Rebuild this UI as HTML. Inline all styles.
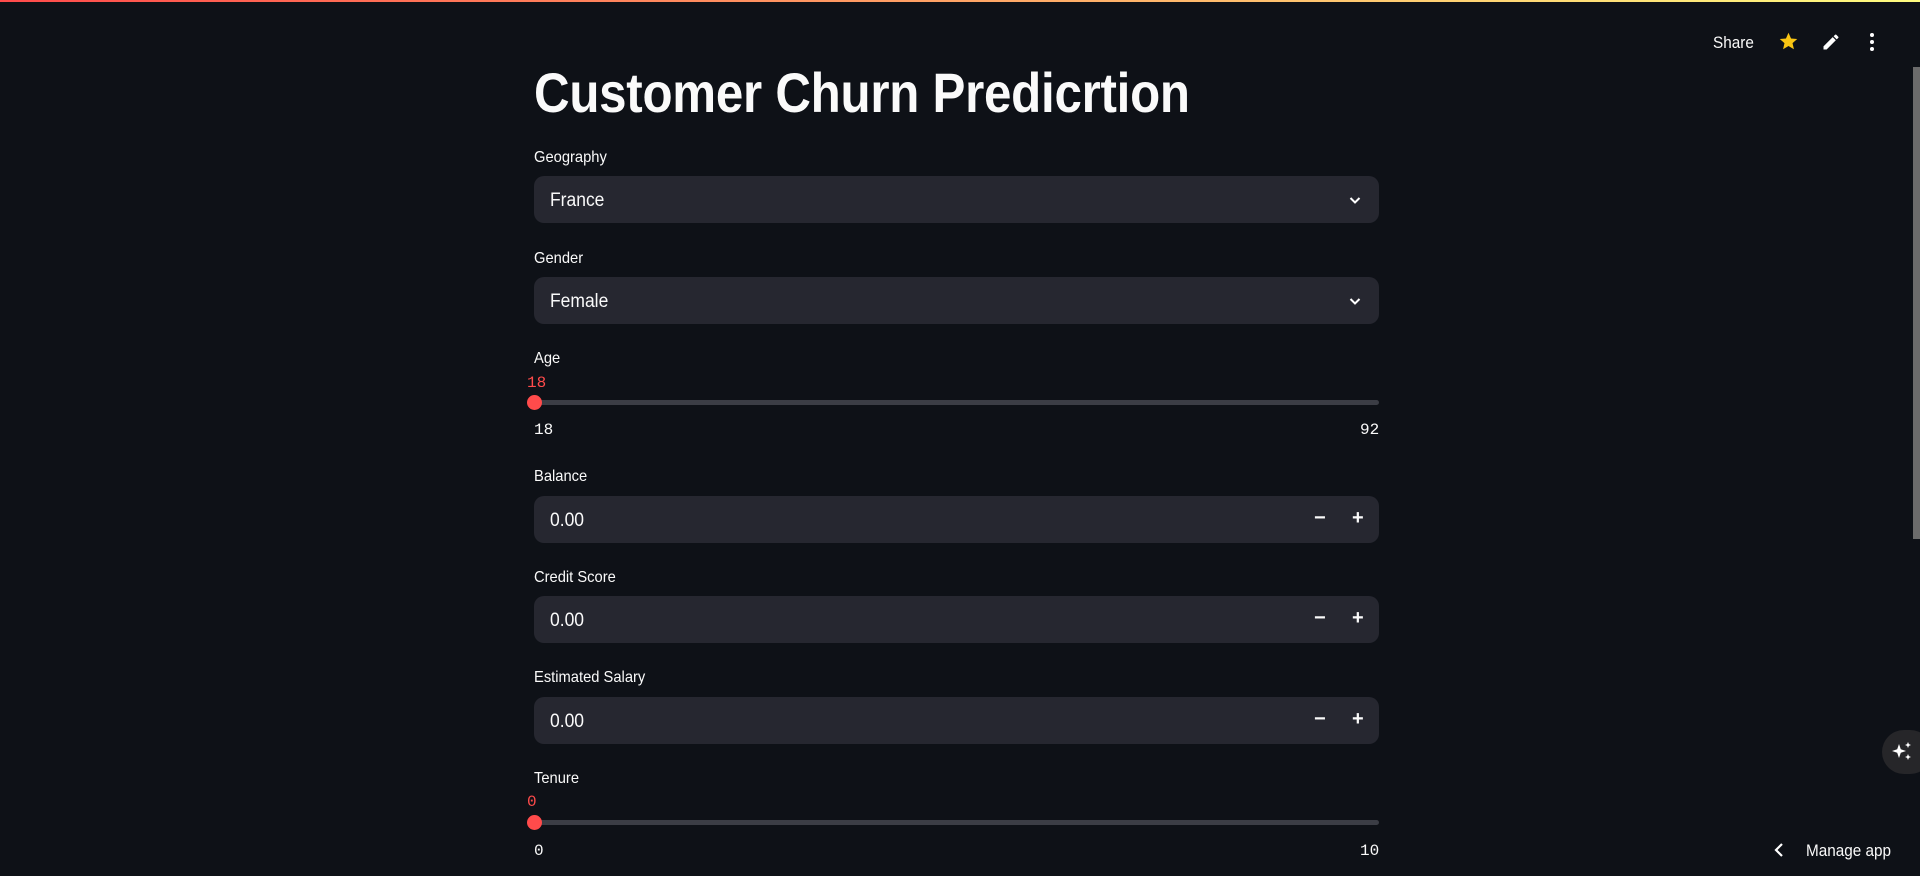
<!DOCTYPE html>
<html><head><meta charset="utf-8"><style>
*{margin:0;padding:0;box-sizing:border-box}
body{width:1920px;height:876px;background:#0e1117;color:#fafafa;font-family:"Liberation Sans",sans-serif;position:relative;overflow:hidden}
.topline{position:absolute;left:0;top:0;width:1920px;height:2px;background:linear-gradient(90deg,#ff4b4b,#fffd80)}
.abs{position:absolute}
h1{position:absolute;left:534px;top:60px;font-size:56px;font-weight:bold;white-space:nowrap;transform:scaleX(0.88);transform-origin:left top;line-height:66px;letter-spacing:-0.3px}
.lbl{position:absolute;left:534px;font-size:16px;transform:scaleX(0.92);transform-origin:left}
.box{position:absolute;left:534px;width:845px;height:47px;background:#262730;border-radius:10px}
.box span.v{position:absolute;left:16px;top:14px;font-size:19px;transform:scaleX(0.92);transform-origin:left}
.chev{position:absolute;right:16px;top:16px}
.pm{position:absolute;top:11px;font-size:20px;font-weight:bold}
.track{position:absolute;left:534px;width:845px;height:5px;background:#3b3d45;border-radius:3px}
.thumb{position:absolute;width:15px;height:15px;border-radius:50%;background:#ff4b4b}
.mono{position:absolute;font-family:"Liberation Mono",monospace;font-size:16px}
</style></head><body>
<div class="topline"></div>
<div class="abs" style="left:1713px;top:33px;font-size:17px;transform:scaleX(0.9);transform-origin:left">Share</div>
<svg class="abs" style="left:1778px;top:31px" width="21" height="21" viewBox="0 0 24 24"><path fill="#f9c513" d="M12 2l2.9 6.6 7.1.6-5.4 4.7 1.6 7L12 17.2 5.8 20.9l1.6-7L2 9.2l7.1-.6z"/></svg>
<svg class="abs" style="left:1821px;top:32px" width="20" height="20" viewBox="0 0 24 24"><path fill="#fff" d="M3 17.25V21h3.75L17.8 9.94l-3.75-3.75L3 17.25zM20.7 7.04a1 1 0 000-1.41l-2.34-2.34a1 1 0 00-1.41 0l-1.83 1.83 3.75 3.75 1.83-1.83z"/></svg>
<svg class="abs" style="left:1864px;top:32px" width="16" height="20" viewBox="0 0 16 20"><circle cx="8" cy="3" r="2" fill="#fff"/><circle cx="8" cy="10" r="2" fill="#fff"/><circle cx="8" cy="17" r="2" fill="#fff"/></svg>
<div class="abs" style="left:1913px;top:67px;width:7px;height:472px;background:#6b6b6b"></div>

<h1>Customer Churn Predicrtion</h1>

<div class="lbl" style="top:149px">Geography</div>
<div class="box" style="top:176px"><span class="v">France</span><svg class="chev" width="16" height="16" viewBox="0 0 16 16"><path d="M3.5 6l4.5 4.5L12.5 6" stroke="#fff" stroke-width="2" fill="none"/></svg></div>

<div class="lbl" style="top:250px">Gender</div>
<div class="box" style="top:277px"><span class="v">Female</span><svg class="chev" width="16" height="16" viewBox="0 0 16 16"><path d="M3.5 6l4.5 4.5L12.5 6" stroke="#fff" stroke-width="2" fill="none"/></svg></div>

<div class="lbl" style="top:350px">Age</div>
<div class="mono" style="left:527px;top:374px;color:#ff4b4b">18</div>
<div class="track" style="top:400px"></div>
<div class="thumb" style="left:527px;top:395px"></div>
<div class="mono" style="left:534px;top:421px">18</div>
<div class="mono" style="left:1360px;top:421px">92</div>

<div class="lbl" style="top:468px">Balance</div>
<div class="box" style="top:496px"><span class="v">0.00</span><span class="pm" style="left:780px">−</span><span class="pm" style="left:818px">+</span></div>

<div class="lbl" style="top:569px">Credit Score</div>
<div class="box" style="top:596px"><span class="v">0.00</span><span class="pm" style="left:780px">−</span><span class="pm" style="left:818px">+</span></div>

<div class="lbl" style="top:669px">Estimated Salary</div>
<div class="box" style="top:697px"><span class="v">0.00</span><span class="pm" style="left:780px">−</span><span class="pm" style="left:818px">+</span></div>

<div class="lbl" style="top:770px">Tenure</div>
<div class="mono" style="left:527px;top:793px;color:#ff4b4b">0</div>
<div class="track" style="top:820px"></div>
<div class="thumb" style="left:527px;top:815px"></div>
<div class="mono" style="left:534px;top:842px">0</div>
<div class="mono" style="left:1360px;top:842px">10</div>

<div class="abs" style="left:1882px;top:730px;width:50px;height:44px;border-radius:22px;background:#262629"></div>
<svg class="abs" style="left:1890px;top:740px" width="24" height="24" viewBox="0 0 24 24"><path fill="#fff" d="M9 4l1.8 5.2L16 11l-5.2 1.8L9 18l-1.8-5.2L2 11l5.2-1.8zM18 2l.9 2.1L21 5l-2.1.9L18 8l-.9-2.1L15 5l2.1-.9zM18 14l.9 2.1L21 17l-2.1.9L18 20l-.9-2.1L15 17l2.1-.9z"/></svg>

<svg class="abs" style="left:1772px;top:841px" width="14" height="18" viewBox="0 0 14 18"><path d="M10 3L4 9l6 6" stroke="#fff" stroke-width="2.2" fill="none"/></svg>
<div class="abs" style="left:1806px;top:841px;font-size:17px;transform:scaleX(0.9);transform-origin:left">Manage app</div>
</body></html>
